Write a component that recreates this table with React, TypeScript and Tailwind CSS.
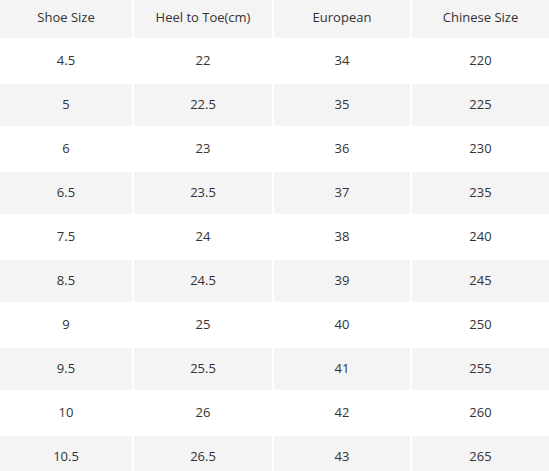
const HEADERS = ["Shoe Size", "Heel to Toe(cm)", "European", "Chinese Size"];

const ROWS: string[][] = [
  ["4.5", "22", "34", "220"],
  ["5", "22.5", "35", "225"],
  ["6", "23", "36", "230"],
  ["6.5", "23.5", "37", "235"],
  ["7.5", "24", "38", "240"],
  ["8.5", "24.5", "39", "245"],
  ["9", "25", "40", "250"],
  ["9.5", "25.5", "41", "255"],
  ["10", "26", "42", "260"],
  ["10.5", "26.5", "43", "265"],
];

export default function App() {
  return (
    <div className="w-[549px] h-[471px] overflow-hidden bg-white font-['Open_Sans',sans-serif] text-[13px] text-[#333]">
      <div className="grid grid-cols-[132px_138px_136px_1fr] grid-rows-[38px] auto-rows-[42px] gap-[2px]">
        {HEADERS.map((h) => (
          <div
            key={h}
            className="flex items-center justify-center pb-[3px] bg-[#f4f4f4]"
          >
            {h}
          </div>
        ))}
        {ROWS.map((row, i) =>
          row.map((cell, j) => (
            <div
              key={`${i}-${j}`}
              className={`flex items-center justify-center ${i % 2 === 1 ? "bg-[#f4f4f4]" : "bg-white"}`}
            >
              {cell}
            </div>
          ))
        )}
      </div>
    </div>
  );
}
